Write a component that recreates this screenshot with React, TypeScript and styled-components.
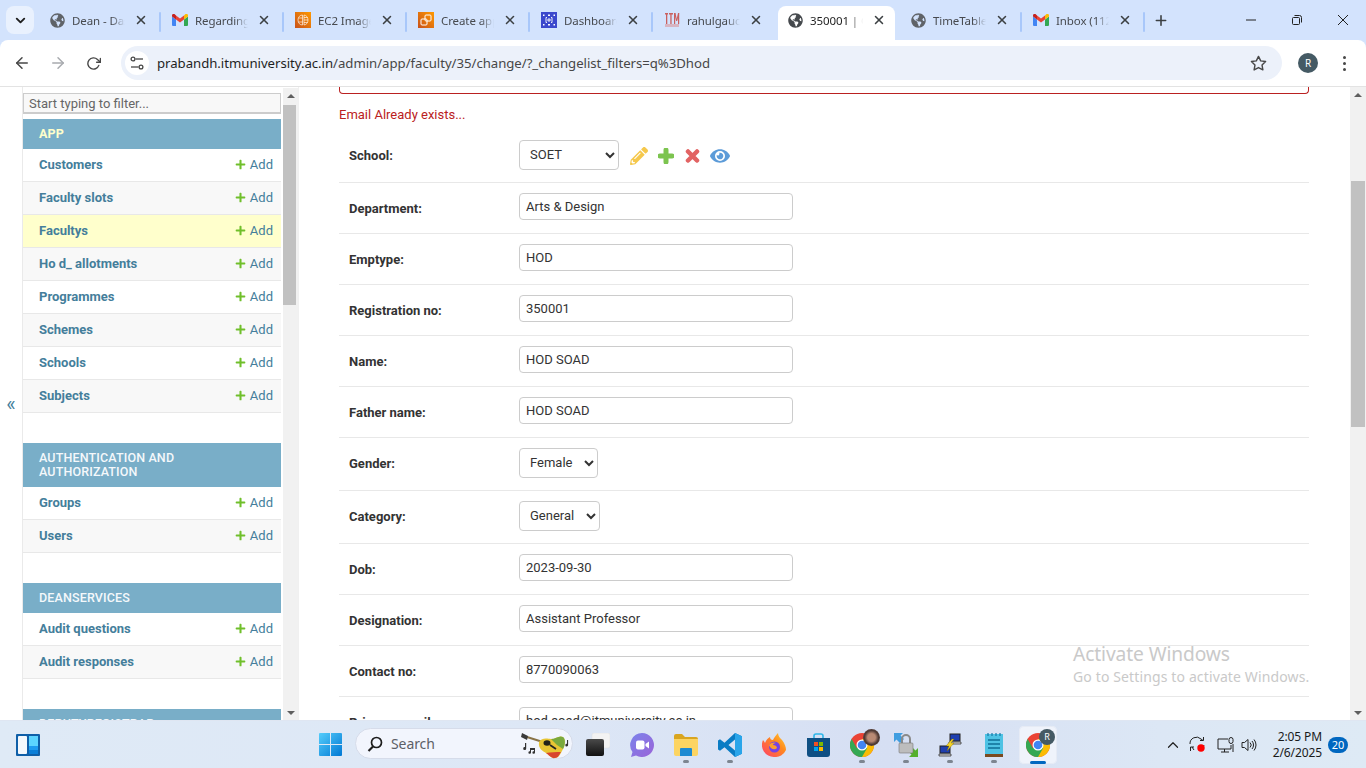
import React from "react";
import styled, { createGlobalStyle } from "styled-components";
import { FaGlobeAmericas, FaPencilAlt, FaPlus, FaEye } from "react-icons/fa";
import { FiArrowLeft, FiArrowRight, FiChevronDown, FiChevronUp, FiPlus, FiRotateCw, FiStar, FiX } from "react-icons/fi";

const Global = createGlobalStyle`
  html, body { margin: 0; padding: 0; height: 100%; overflow: hidden; background: #fff; }
  * { box-sizing: border-box; }
`;

const UI = `"Noto Sans", "Open Sans", sans-serif`;
const WEB = `Roboto, "Liberation Sans", sans-serif`;

const Screen = styled.div`
  width: 1366px; height: 768px; display: flex; flex-direction: column; overflow: hidden; position: relative;
`;

/* ---------- tab strip ---------- */
const TabStrip = styled.div`
  height: 40px; flex: none; background: #d3e3fd; display: flex; align-items: flex-start; padding-left: 6px;
`;
const TabSearch = styled.div`
  width: 28px; height: 28px; margin-top: 6px; margin-right: 3px; border-radius: 8px; background: #e9f1fe;
  display: flex; align-items: center; justify-content: center; color: #1f1f1f; flex: none;
`;
const Tab = styled.div<{ $active?: boolean; $sep?: boolean }>`
  width: 123px; height: 34px; margin-top: 6px; flex: none; display: flex; align-items: center; padding: 0 11px 6px 12px;
  position: relative; z-index: ${(p) => (p.$active ? 1 : 0)};
  &::before {
    content: ""; position: absolute; top: 0; bottom: 0; left: 3px; right: 3px; z-index: -1;
    background: ${(p) => (p.$active ? "#fff" : "transparent")}; border-radius: 8px 8px 0 0;
  }
  &::after {
    content: ""; display: ${(p) => (p.$sep ? "block" : "none")}; position: absolute; right: -1px; top: 6px;
    width: 2px; height: 20px; background: #a8c7fa; border-radius: 1px;
  }
`;
const Favicon = styled.span`
  width: 16px; height: 16px; flex: none; display: flex; align-items: center; justify-content: center; color: #5f6368;
`;
const TabTitle = styled.span<{ $active?: boolean }>`
  flex: 1; min-width: 0; margin-left: 7px; padding-top: 1px; font: 11.5px/16px ${UI}; letter-spacing: -0.1px; white-space: nowrap; overflow: hidden;
  color: ${(p) => (p.$active ? "#1f1f1f" : "#474a4f")};
  -webkit-mask-image: linear-gradient(90deg, #000 75%, transparent 100%);
  mask-image: linear-gradient(90deg, #000 75%, transparent 100%);
`;
const TabClose = styled.span`
  width: 16px; height: 16px; margin-left: 8px; flex: none; display: flex; align-items: center; justify-content: center; color: #3c4043;
`;
const NewTab = styled.div`
  width: 16px; height: 16px; margin: 12px 0 0 9px; color: #3c4043; display: flex; align-items: center; justify-content: center;
`;
const WindowButtons = styled.div`
  margin-left: auto; display: flex; height: 40px;
`;
const WindowButton = styled.div`
  width: 46px; height: 40px; display: flex; align-items: center; justify-content: center; color: #222;
`;

/* ---------- toolbar ---------- */
const Toolbar = styled.div`
  height: 46px; flex: none; background: #d3e3fd;
`;
const ToolbarInner = styled.div`
  height: 46px; background: #fff; border-radius: 8px 8px 0 0; display: flex; align-items: center; padding-left: 12px;
`;
const NavButton = styled.div<{ $dim?: boolean; $gap: number }>`
  width: 20px; height: 20px; margin-right: ${(p) => p.$gap}px; display: flex; align-items: center; justify-content: center;
  color: ${(p) => (p.$dim ? "#a8abaf" : "#474747")};
`;
const Omnibox = styled.div`
  width: 1161px; height: 34px; margin-left: 1px; border-radius: 17px; background: #ecf1fa; display: flex; align-items: center; padding: 0 15px 0 4px;
`;
const TuneBadge = styled.div`
  width: 24px; height: 24px; border-radius: 50%; background: #fff; display: flex; align-items: center; justify-content: center; flex: none;
`;
const Url = styled.div`
  margin-left: 8px; flex: 1; font: 13.2px/18px ${UI}; color: #1f1f1f; white-space: nowrap; letter-spacing: -0.03px;
`;
const UrlRest = styled.span`
  color: #474747;
`;
const Avatar = styled.div`
  width: 20px; height: 20px; border-radius: 50%; margin-left: 16px; background: #455a64; color: #fff; font: 10px/20px ${UI}; text-align: center; flex: none;
`;
const Dots = styled.div`
  margin-left: 25px; width: 3px; display: flex; flex-direction: column; gap: 3px;
  i { width: 3px; height: 3px; border-radius: 50%; background: #474747; display: block; }
`;

/* ---------- page ---------- */
const Page = styled.div`
  height: 634px; flex: none; display: flex; overflow: hidden; border-top: 1px solid #e3e3e3; position: relative;
`;
const Toggle = styled.div`
  width: 23px; flex: none; border-right: 1px solid #eaeaea; display: flex; align-items: center; justify-content: center;
  font: 20px/20px ${WEB}; color: #447e9b;
`;
const SideCol = styled.div`
  width: 258px; flex: none; padding-top: 6px; font-family: ${WEB}; overflow: hidden;
`;
const Filter = styled.div`
  height: 21px; background: #f8f8f8; border: 1px solid #ccc; border-width: 1px 1px 2px 1px; font: 13px/19px ${WEB}; color: #666; padding-left: 5px; margin-bottom: 5px;
`;
const Module = styled.section`
  margin-bottom: 30px;
`;
const ModuleHead = styled.div<{ $current?: boolean }>`
  background: #79aec8; padding: 8px 30px 8px 16px; font: ${(p) => (p.$current ? 700 : 500)} 12.5px/14px ${WEB}; letter-spacing: 0.15px;
  color: ${(p) => (p.$current ? "#ffffcc" : "#f4f8fb")}; white-space: normal;
`;
const ModelRow = styled.div<{ $even?: boolean; $current?: boolean }>`
  height: 33px; display: flex; align-items: center; padding: 0 8px 0 16px; border-bottom: 1px solid #e8e8e8;
  background: ${(p) => (p.$current ? "#ffffcc" : p.$even ? "#f8f8f8" : "#fff")};
`;
const ModelLink = styled.span`
  font: 700 13px/16px ${WEB}; color: #447e9b;
`;
const AddLink = styled.span`
  margin-left: auto; display: flex; align-items: center; gap: 4px; font: 13px/16px ${WEB}; color: #447e9b;
  svg { color: #70bf2b; margin-top: -2px; }
`;
const Scrollbar = styled.div<{ $thumbTop: number; $thumbHeight: number }>`
  width: 16px; flex: none; background: #f1f1f1; display: flex; flex-direction: column; align-items: center; position: relative;
  &::before {
    content: ""; display: block; width: 14px; flex: none; margin-top: ${(p) => p.$thumbTop}px; height: ${(p) => p.$thumbHeight}px; background: #c1c1c1;
  }
`;
const ArrowUp = styled.span`
  position: absolute; top: 6px; left: 4px; width: 0; height: 0;
  border-left: 4px solid transparent; border-right: 4px solid transparent; border-bottom: 4px solid #5f5f5f;
`;
const ArrowDown = styled.span`
  position: absolute; bottom: 5px; left: 4px; width: 0; height: 0;
  border-left: 4px solid transparent; border-right: 4px solid transparent; border-top: 4px solid #5f5f5f;
`;
const SideScroll = styled(Scrollbar)`
  margin-left: 2px; width: 15px; margin-top: 1px; &::before { width: 13px; margin-right: 2px; }
`;
const Main = styled.main`
  flex: 1; min-width: 0; padding: 0 41px 0 40px; border-left: 1px solid #f0f0f0; font-family: ${WEB}; overflow: hidden;
`;
const ErrorBox = styled.div`
  height: 7px; border: 1px solid #ba2121; border-top: 0; border-radius: 0 0 4px 4px;
`;
const ErrorText = styled.p`
  margin: 13px 0 7px; font: 13px/16px ${WEB}; color: #ba2121;
`;
const Row = styled.div`
  display: flex; align-items: flex-start; padding: 10px 0 12px 10px; border-bottom: 1px solid #e8e8e8;
`;
const InputRow = styled(Row)`
  padding-bottom: 13px;
`;
const Label = styled.label`
  width: 170px; flex: none; margin-top: 8px; font: 700 13px/16px ${WEB}; color: #333;
`;
const TextInput = styled.input`
  width: 274px; height: 27px; padding: 0 6px; border: 1px solid #ccc; border-radius: 4px; font: 13px ${WEB}; color: #333; background: #fff; outline: none;
`;
const Select = styled.select<{ $w: number }>`
  width: ${(p) => p.$w}px; height: 30px; padding: 0 6px 1px 6px; border: 1px solid #ccc; border-radius: 4px; font: 13px ${WEB}; color: #333; background: #fff; outline: none;
`;
const Related = styled.div`
  display: flex; align-items: center; height: 30px; margin-left: 11px; padding-top: 2px;
`;
const RelatedIcon = styled.span<{ $color: string; $gap: number }>`
  display: flex; color: ${(p) => p.$color}; margin-right: ${(p) => p.$gap}px;
`;
const Watermark = styled.div`
  position: absolute; left: 1073px; top: 553px; color: #c9c9c9; font-family: ${UI}; pointer-events: none;
`;
const WaterTitle = styled.div`
  font-size: 19.2px; line-height: 27px; letter-spacing: -0.1px;
`;
const WaterSub = styled.div`
  font-size: 14px; line-height: 19px; letter-spacing: 0.13px; white-space: nowrap;
`;

/* ---------- taskbar ---------- */
const Taskbar = styled.footer`
  height: 48px; flex: none; display: flex; align-items: center; border-top: 1px solid #dfe6f2;
  background: linear-gradient(90deg, #dfeaf6 0%, #dde7f6 40%, #d6dff3 65%, #dce7f5 85%, #deeaf5 100%);
`;
const WidgetArea = styled.div`
  width: 308px; flex: none; padding-left: 16px; display: flex;
`;
const TaskCell = styled.div<{ $running?: boolean }>`
  width: 44px; height: 38px; flex: none; display: flex; align-items: center; justify-content: center; position: relative; border-radius: 5px;
  &::after {
    content: ""; display: ${(p) => (p.$running ? "block" : "none")}; position: absolute; bottom: 1px; left: 50%;
    transform: translateX(-50%); height: 3px; border-radius: 2px; width: 6px; background: #7d8590;
  }
`;
const ActiveCell = styled(TaskCell)`
  width: 38px; margin: 0 3px; background: #eff3fb; box-shadow: inset 0 0 0 1px #e6ebf5;
  &::after { display: block; bottom: 0; width: 16px; background: #0067c0; }
`;
const SearchPill = styled.div`
  width: 218px; height: 31px; margin: -2px 3px 0; flex: none; border-radius: 16px; background: #f2f5fd; border: 1px solid #d6dcea;
  display: flex; align-items: center; padding-left: 11px; position: relative; font: 14px/18px ${UI}; color: #5c5f66;
`;
const SearchLabel = styled.span`
  margin-left: 8px; letter-spacing: -0.1px;
`;
const GuitarArt = styled.span`
  position: absolute; right: -1px; top: -1px; display: flex;
`;
const Tray = styled.div`
  margin-left: auto; padding-right: 18px; display: flex; align-items: center;
`;
const TrayIcon = styled.span<{ $gap: number }>`
  display: flex; color: #222; margin-right: ${(p) => p.$gap}px;
`;
const Clock = styled.div`
  font: 12px/16px ${UI}; color: #1a1a1a; text-align: right; margin-left: 15px; letter-spacing: -0.1px; white-space: nowrap;
`;
const Badge = styled.div`
  width: 20px; height: 16px; border-radius: 8px; margin-left: 6px; background: #0067c0; color: #fff; font: 11px/16px ${UI}; text-align: center;
`;

/* ---------- drawings ---------- */
const Gmail = () => (
  <svg width="16" height="12" viewBox="0 0 16 12">
    <path fill="#4285f4" d="M1 12h3V5.500L0 2.500V11a1 1 0 0 0 1 1z" />
    <path fill="#34a853" d="M12 12h3a1 1 0 0 0 1-1V2.500l-4 3z" />
    <path fill="#fbbc04" d="M12 1.500v4l4-3v-1C16 .1 14.400-.7 13.300.2z" />
    <path fill="#ea4335" d="M4 5.500v-4l4 3 4-3v4l-4 3z" />
    <path fill="#c5221f" d="M0 1.500v1l4 3v-4L2.700.2C1.600-.7 0 .1 0 1.500z" />
  </svg>
);
const AwsBuilder = () => (
  <svg width="16" height="16" viewBox="0 0 16 16">
    <defs><linearGradient id="ao" x1="0" y1="1" x2="1" y2="0"><stop offset="0" stopColor="#c8511b" /><stop offset="1" stopColor="#f90" /></linearGradient></defs>
    <rect width="16" height="16" fill="url(#ao)" />
    <g fill="none" stroke="#fff" strokeOpacity=".8" strokeWidth=".8">
      <path d="M7.500 3C5 3 3 5 3 8s2 5 4.500 5zM9 3c2.500.3 4 2.400 4 5s-1.500 4.700-4 5z" />
      <path d="M3.500 6h4M3.500 10h4M9 5.500h3.500M9 8h4M9 10.500h3.500" />
    </g>
  </svg>
);
const AwsApp = () => (
  <svg width="16" height="16" viewBox="0 0 16 16">
    <defs><linearGradient id="ap" x1="0" y1="1" x2="1" y2="0"><stop offset="0" stopColor="#c8511b" /><stop offset="1" stopColor="#f90" /></linearGradient></defs>
    <rect width="16" height="16" fill="url(#ap)" />
    <g fill="none" stroke="#fff" strokeWidth="1">
      <rect x="7" y="3" width="6" height="6" rx="1" />
      <rect x="3" y="7" width="6" height="6" rx="1" />
    </g>
  </svg>
);
const AwsDash = () => (
  <svg width="16" height="16" viewBox="0 0 16 16">
    <rect width="16" height="16" fill="#3b48cc" />
    <g fill="#fff">
      <rect x="2" y="2.500" width="1.500" height="1.500" /><rect x="7" y="2.500" width="2" height="1.500" /><rect x="12.500" y="2.500" width="1.500" height="1.500" />
      <rect x="2" y="12" width="1.500" height="1.500" /><rect x="7" y="12" width="2" height="1.500" /><rect x="12.500" y="12" width="1.500" height="1.500" />
    </g>
    <path fill="none" stroke="#fff" strokeWidth=".9" d="M6 5.500H5v5h1M10 5.500h1v5h-1M7 7h2v2H7z" />
  </svg>
);
const ItmLogo = () => (
  <svg width="16" height="16" viewBox="0 0 16 16" style={{ filter: "blur(.6px)" }}>
    <g fill="#c9605f">
      <rect x="1" y="1" width="3" height="1.500" /><rect x="2" y="1" width="1.300" height="11" />
      <rect x="5" y="1" width="4" height="1.500" /><rect x="6.300" y="1" width="1.300" height="11" />
      <rect x="10" y="1" width="1.200" height="11" /><rect x="14" y="1" width="1.200" height="11" /><path d="M10 1h1.500l1.200 6 1.300-6h1.200l-2 8h-1z" />
    </g>
    <rect x="1" y="12" width="14" height="3" fill="#d9a0a8" opacity=".7" />
  </svg>
);
const Tune = () => (
  <svg width="16" height="16" viewBox="0 0 16 16" fill="none" stroke="#474747" strokeWidth="1.300">
    <circle cx="4" cy="4" r="1.900" /><path d="M6.500 4H14" />
    <circle cx="12" cy="12" r="1.900" /><path d="M2 12h7.500" />
  </svg>
);
const WinMin = () => <svg width="10" height="10" viewBox="0 0 10 10"><path d="M0 5h10" stroke="#222" /></svg>;
const WinMax = () => (
  <svg width="10" height="10" viewBox="0 0 10 10" fill="none" stroke="#222"><rect x=".5" y="2.500" width="7" height="7" rx="1" /><path d="M2.500 .5h5a2 2 0 0 1 2 2v5" /></svg>
);
const WinClose = () => <svg width="10" height="10" viewBox="0 0 10 10"><path d="M0 0l10 10M10 0L0 10" stroke="#222" /></svg>;

const ChunkyPlus = () => (
  <svg width="16" height="16" viewBox="0 0 16 16"><path d="M8 2v12M2 8h12" stroke="#7cc44f" strokeWidth="5" strokeLinecap="round" /></svg>
);
const ChunkyCross = () => (
  <svg width="15" height="14" viewBox="0 0 15 14"><path d="M3 2.500l9 9M12 2.500l-9 9" stroke="#e26363" strokeWidth="4.500" strokeLinecap="round" /></svg>
);

const WidgetIcon = () => (
  <svg width="24" height="22" viewBox="0 0 24 22">
    <rect width="24" height="22" rx="1" fill="#0f5fa8" />
    <rect x="2" y="2" width="9" height="18" rx="1" fill="#f4f8fc" />
    <rect x="13" y="2" width="9" height="10" fill="#5cd4ff" />
    <rect x="13" y="12" width="9" height="4" fill="#1e9bf0" />
    <rect x="13" y="16" width="9" height="4" fill="#0b7fd8" />
  </svg>
);
const StartIcon = () => (
  <svg width="23" height="23" viewBox="0 0 23 23">
    <defs><linearGradient id="st" x1="0" y1="0" x2="1" y2="1"><stop offset="0" stopColor="#55cdfb" /><stop offset="1" stopColor="#0078d4" /></linearGradient></defs>
    <path fill="url(#st)" d="M1 0h10v11H0V1a1 1 0 0 1 1-1zM12 0h10a1 1 0 0 1 1 1v10H12zM0 12h11v11H1a1 1 0 0 1-1-1zM12 12h11v10a1 1 0 0 1-1 1H12z" />
  </svg>
);
const SearchGlass = () => (
  <svg width="16" height="16" viewBox="0 0 16 16" fill="none" stroke="#1d1d1d" strokeWidth="1.700">
    <circle cx="9.500" cy="6.500" r="5" /><path d="M6 10.500L1.500 15" strokeWidth="2.200" />
  </svg>
);
const Guitar = () => (
  <svg width="54" height="32" viewBox="0 0 54 32">
    <path d="M8 9l19 6" stroke="#8a7448" strokeWidth="2" />
    <path d="M3 5l6 3-1 4-6-3z" fill="#3a3a3a" />
    <path d="M20 14C23 9 29 11 32 11c5 0 8-4 12-2 3 2 2 9 0 12-2 4-4 9-8 9-3 1-6-3-9-5-3-2-8-4-7-11z" fill="#e8c534" />
    <path d="M32 11c5 0 8-4 12-2 3 2 2 9 0 12l-6-4z" fill="#7aa93e" />
    <path d="M27 25c5-1 10-1 15-1-2 3-3 6-6 6-3 1-6-3-9-5z" fill="#d8452e" />
    <ellipse cx="28" cy="15" rx="3.500" ry="2.800" fill="#22221a" />
    <path d="M31 17l6 4" stroke="#222" strokeWidth="1.800" />
    <g fill="#333">
      <path d="M6 15h1.200v5.500a1.500 1.500 0 1 1-1.200-1.400z" />
      <path d="M11 20h5v4.500a1.300 1.300 0 1 1-1-1.200V22h-3v2.500a1.300 1.300 0 1 1-1-1.200z" />
      <path d="M48 12h1.100v5a1.400 1.400 0 1 1-1.100-1.300z" />
    </g>
  </svg>
);
const BlackSquares = () => (
  <svg width="24" height="23" viewBox="0 0 24 23">
    <defs><linearGradient id="bl" x1="0" y1="0" x2="0" y2="1"><stop offset="0" stopColor="#4a4a4a" /><stop offset="1" stopColor="#111" /></linearGradient></defs>
    <rect x="6" y="0" width="18" height="15" rx="2" fill="#f3f3f3" stroke="#ddd" strokeWidth=".5" />
    <rect x="0" y="6" width="18" height="17" rx="2" fill="url(#bl)" />
  </svg>
);
const VideoChat = () => (
  <svg width="24" height="24" viewBox="0 0 24 24">
    <defs><linearGradient id="vc" x1="0" y1="0" x2="1" y2="1"><stop offset="0" stopColor="#7b83eb" /><stop offset="1" stopColor="#9a64d8" /></linearGradient></defs>
    <path fill="url(#vc)" d="M12 0a12 12 0 1 1-6 22.400L1 24l1.500-5A12 12 0 0 1 12 0z" />
    <rect x="6" y="7.500" width="8.500" height="9" rx="2" fill="#fff" /><path d="M15.500 11l3.500-2.500v7L15.500 13z" fill="#fff" />
  </svg>
);
const Folder = () => (
  <svg width="24" height="22" viewBox="0 0 24 22">
    <path d="M0 2a2 2 0 0 1 2-2h6l3 3h11a2 2 0 0 1 2 2v2H0z" fill="#d9a520" />
    <path d="M0 5h24v15a2 2 0 0 1-2 2H2a2 2 0 0 1-2-2z" fill="#fcd462" />
    <path d="M7 14h10a1 1 0 0 1 1 1v7H6v-7a1 1 0 0 1 1-1z" fill="#1d8ad2" />
  </svg>
);
const VSCode = () => (
  <svg width="24" height="24" viewBox="0 0 24 24">
    <path fill="#0a7cc4" d="M17 0l7 3.300v17.400L17 24 6.500 14.300 2 17.800 0 16.500V7.500l2-1.300 4.500 3.500zM17 6.500L10.500 12l6.500 5.500z" />
    <path fill="#2aa5ea" d="M17 0l7 3.300v17.400L17 24z" />
  </svg>
);
const Firefox = () => (
  <svg width="24" height="24" viewBox="0 0 24 24">
    <defs><linearGradient id="ff" x1="0" y1="1" x2="1" y2="0"><stop offset="0" stopColor="#ff3d6e" /><stop offset=".6" stopColor="#ff8a1e" /><stop offset="1" stopColor="#ffd23a" /></linearGradient></defs>
    <path fill="url(#ff)" d="M12 24A12 12 0 0 1 1 7c1 1 1.500 2 2 3 1-3 3-5 5-6 0 2 1 3 3 3 1-2 3-5 5-7 0 3 2 5 4 7 3 4 4 7 4 10a12 12 0 0 1-12 7z" />
    <circle cx="12.500" cy="14" r="5.500" fill="#7542e5" />
    <path d="M7 12c2-3 6-3 7-2-2 0-3 1-3 2 2 0 4 1 4 3-2 2-6 2-8-3z" fill="#ff9d2e" />
  </svg>
);
const Store = () => (
  <svg width="23" height="24" viewBox="0 0 23 24">
    <path d="M7 5V3a2 2 0 0 1 2-2h5a2 2 0 0 1 2 2v2" fill="none" stroke="#2fb6e8" strokeWidth="1.600" />
    <path d="M0 5h23v16a3 3 0 0 1-3 3H3a3 3 0 0 1-3-3z" fill="#0f4f83" />
    <rect x="7" y="9" width="4" height="4" fill="#f25022" /><rect x="12" y="9" width="4" height="4" fill="#7fba00" />
    <rect x="7" y="14" width="4" height="4" fill="#00a4ef" /><rect x="12" y="14" width="4" height="4" fill="#ffb900" />
  </svg>
);
const Chrome = () => (
  <svg width="24" height="24" viewBox="0 0 24 24">
    <circle cx="12" cy="12" r="12" fill="#ea4335" />
    <path d="M12 24A12 12 0 0 0 22.400 6H12z" fill="#fbbc04" />
    <path d="M1.600 6A12 12 0 0 0 12 24l5.200-9H6.800z" fill="#34a853" />
    <circle cx="12" cy="12" r="5.500" fill="#fff" /><circle cx="12" cy="12" r="4.300" fill="#4285f4" />
  </svg>
);
const ProfileFace = styled.span`
  position: absolute; top: 3px; left: 23px; width: 17px; height: 17px; border-radius: 50%;
  background: radial-gradient(circle at 50% 50%, #b98a74 0 32%, #4e3a35 58%, #6e5147 100%);
`;
const ProfileR = styled.span`
  position: absolute; top: 3px; left: 20px; width: 16px; height: 16px; border-radius: 50%; background: #455a64; color: #fff; font: 9px/16px ${UI}; text-align: center;
`;
const LockNet = () => (
  <svg width="24" height="24" viewBox="0 0 24 24">
    <path d="M0 0h9L6.500 2.500 10 6 6 10 2.500 6.500 0 9z" fill="#3f9de0" />
    <path d="M24 24h-9l2.500-2.500L14 18l4-4 3.500 3.500L24 15z" fill="#55b02c" />
    <path d="M8 10V6a4 4 0 0 1 8 0v4" fill="none" stroke="#8a8a8a" strokeWidth="2" />
    <rect x="5" y="10" width="14" height="10" rx="1" fill="#bdbdbd" stroke="#777" strokeWidth=".6" />
  </svg>
);
const NetPCs = () => (
  <svg width="24" height="24" viewBox="0 0 24 24">
    <rect x="12" y="1" width="10" height="7" fill="#1f3fb0" stroke="#222" />
    <path d="M11 9h12v2H11z" fill="#ddd" stroke="#222" strokeWidth=".7" />
    <rect x="2" y="13" width="10" height="7" fill="#1f3fb0" stroke="#222" />
    <path d="M1 21h12v2H1z" fill="#ddd" stroke="#222" strokeWidth=".7" />
    <path d="M14 6l-6 7h3l-2 5 7-8h-3l3-4z" fill="#f5d327" stroke="#7a6500" strokeWidth=".4" />
  </svg>
);
const Notepad = () => (
  <svg width="18" height="24" viewBox="0 0 18 24">
    <rect y="1" width="18" height="20" fill="#4ec2e4" />
    <rect y="21" width="18" height="3" fill="#7a4a20" />
    <path d="M3 0v3M7 0v3M11 0v3M15 0v3" stroke="#1779a8" strokeWidth="1.200" />
    <path d="M3 7h12M3 11h12M3 15h12" stroke="#0f6f96" strokeWidth="1.400" />
  </svg>
);
const SyncIcon = () => (
  <svg width="18" height="17" viewBox="0 0 18 17" fill="none" stroke="#222" strokeWidth="1">
    <path d="M1 8a6.500 6.500 0 0 1 11-5l2 1.500M14.500 1v3.500H11M15 9a6.500 6.500 0 0 1-1 2M3 11l2 3M1.500 15v-4h3.500" />
    <circle cx="12" cy="12" r="3.700" fill="#f00" stroke="none" />
  </svg>
);
const MonitorIcon = () => (
  <svg width="17" height="16" viewBox="0 0 17 16" fill="none" stroke="#222" strokeWidth="1">
    <path d="M11 2H1v10h13V8M4 15h8M7.500 12v3" />
    <rect x="12" y=".5" width="4" height="6" rx="2" />
    <path d="M16 7v8" />
  </svg>
);
const VolumeIcon = () => (
  <svg width="17" height="14" viewBox="0 0 17 14" fill="none" stroke="#222" strokeWidth="1">
    <path d="M1 4.500h2.500L7 1.500v11l-3.500-3H1zM9 4.500a3.500 3.500 0 0 1 0 5M11 3a6 6 0 0 1 0 8M13 1.500a8.500 8.500 0 0 1 0 11" />
  </svg>
);

const tabs = [
  { icon: <FaGlobeAmericas size={15} />, title: "Dean - Dashboard", sep: true },
  { icon: <Gmail />, title: "Regarding the mail", sep: true },
  { icon: <AwsBuilder />, title: "EC2 Image Builder", sep: true },
  { icon: <AwsApp />, title: "Create application", sep: true },
  { icon: <AwsDash />, title: "Dashboard | Console", sep: true },
  { icon: <ItmLogo />, title: "rahulgaucha", sep: false },
  { icon: <FaGlobeAmericas size={15} color="#45494d" />, title: "350001 | Change", active: true, sep: false },
  { icon: <FaGlobeAmericas size={15} />, title: "TimeTable - Admin", sep: true },
  { icon: <Gmail />, title: "Inbox (1123) - rahul", sep: true },
];

const modules = [
  { title: "APP", current: true, rows: ["Customers", "Faculty slots", "Facultys", "Ho d_ allotments", "Programmes", "Schemes", "Schools", "Subjects"] },
  { title: "AUTHENTICATION AND AUTHORIZATION", rows: ["Groups", "Users"] },
  { title: "DEANSERVICES", rows: ["Audit questions", "Audit responses"] },
  { title: "DEPUTYREGISTRAR", rows: ["Audit"] },
];

type Field = { label: string; value: string; width?: number };
const fields: Field[] = [
  { label: "Department:", value: "Arts & Design" },
  { label: "Emptype:", value: "HOD" },
  { label: "Registration no:", value: "350001" },
  { label: "Name:", value: "HOD SOAD" },
  { label: "Father name:", value: "HOD SOAD" },
  { label: "Gender:", value: "Female", width: 79 },
  { label: "Category:", value: "General", width: 81 },
  { label: "Dob:", value: "2023-09-30" },
  { label: "Designation:", value: "Assistant Professor" },
  { label: "Contact no:", value: "8770090063" },
  { label: "Primary email:", value: "hod.soad@itmuniversity.ac.in" },
];

export default function App() {
  return (
    <Screen>
      <Global />
      <TabStrip>
        <TabSearch><FiChevronDown size={15} strokeWidth={3} /></TabSearch>
        {tabs.map((t) => (
          <Tab key={t.title} $active={t.active} $sep={t.sep}>
            <Favicon>{t.icon}</Favicon>
            <TabTitle $active={t.active}>{t.title}</TabTitle>
            <TabClose><FiX size={14} strokeWidth={2.6} /></TabClose>
          </Tab>
        ))}
        <NewTab><FiPlus size={17} strokeWidth={2.4} /></NewTab>
        <WindowButtons>
          <WindowButton><WinMin /></WindowButton>
          <WindowButton><WinMax /></WindowButton>
          <WindowButton><WinClose /></WindowButton>
        </WindowButtons>
      </TabStrip>
      <Toolbar>
        <ToolbarInner>
          <NavButton $gap={16}><FiArrowLeft size={18} strokeWidth={2} /></NavButton>
          <NavButton $dim $gap={15}><FiArrowRight size={18} strokeWidth={2} /></NavButton>
          <NavButton $gap={17}><FiRotateCw size={15} strokeWidth={2.2} /></NavButton>
          <Omnibox>
            <TuneBadge><Tune /></TuneBadge>
            <Url>prabandh.itmuniversity.ac.in<UrlRest>/admin/app/faculty/35/change/?_changelist_filters=q%3Dhod</UrlRest></Url>
            <FiStar size={17} strokeWidth={2} color="#474747" />
          </Omnibox>
          <Avatar>R</Avatar>
          <Dots><i /><i /><i /></Dots>
        </ToolbarInner>
      </Toolbar>
      <Page>
        <Toggle>«</Toggle>
        <SideCol>
          <Filter>Start typing to filter...</Filter>
          {modules.map((m) => (
            <Module key={m.title}>
              <ModuleHead $current={m.current}>{m.title}</ModuleHead>
              {m.rows.map((r, i) => (
                <ModelRow key={r} $even={i % 2 === 1} $current={r === "Facultys"}>
                  <ModelLink>{r}</ModelLink>
                  <AddLink><FaPlus size={11} />Add</AddLink>
                </ModelRow>
              ))}
            </Module>
          ))}
        </SideCol>
        <SideScroll $thumbTop={17} $thumbHeight={200}><ArrowUp /><ArrowDown /></SideScroll>
        <Main>
          <ErrorBox />
          <ErrorText>Email Already exists...</ErrorText>
          <Row>
            <Label>School:</Label>
            <Select $w={100} defaultValue="SOET"><option>SOET</option></Select>
            <Related>
              <RelatedIcon $color="#f5c84c" $gap={10}><FaPencilAlt size={18} /></RelatedIcon>
              <RelatedIcon $color="#7cc44f" $gap={11}><ChunkyPlus /></RelatedIcon>
              <RelatedIcon $color="#e26363" $gap={10}><ChunkyCross /></RelatedIcon>
              <RelatedIcon $color="#5c9bd8" $gap={0}><FaEye size={20} /></RelatedIcon>
            </Related>
          </Row>
          {fields.map((f) =>
            f.width ? (
              <Row key={f.label}>
                <Label>{f.label}</Label>
                <Select $w={f.width} defaultValue={f.value}><option>{f.value}</option></Select>
              </Row>
            ) : (
              <InputRow key={f.label}>
                <Label>{f.label}</Label>
                <TextInput defaultValue={f.value} readOnly />
              </InputRow>
            )
          )}
        </Main>
        <Scrollbar $thumbTop={94} $thumbHeight={246}><ArrowUp /><ArrowDown /></Scrollbar>
        <Watermark>
          <WaterTitle>Activate Windows</WaterTitle>
          <WaterSub>Go to Settings to activate Windows.</WaterSub>
        </Watermark>
      </Page>
      <Taskbar>
        <WidgetArea><WidgetIcon /></WidgetArea>
        <TaskCell><StartIcon /></TaskCell>
        <SearchPill>
          <SearchGlass />
          <SearchLabel>Search</SearchLabel>
          <GuitarArt><Guitar /></GuitarArt>
        </SearchPill>
        <TaskCell><BlackSquares /></TaskCell>
        <TaskCell><VideoChat /></TaskCell>
        <TaskCell $running><Folder /></TaskCell>
        <TaskCell $running><VSCode /></TaskCell>
        <TaskCell><Firefox /></TaskCell>
        <TaskCell><Store /></TaskCell>
        <TaskCell $running><Chrome /><ProfileFace /></TaskCell>
        <TaskCell $running><LockNet /></TaskCell>
        <TaskCell $running><NetPCs /></TaskCell>
        <TaskCell $running><Notepad /></TaskCell>
        <ActiveCell><Chrome /><ProfileR>R</ProfileR></ActiveCell>
        <Tray>
          <TrayIcon $gap={7}><FiChevronUp size={18} strokeWidth={1.6} /></TrayIcon>
          <TrayIcon $gap={10}><SyncIcon /></TrayIcon>
          <TrayIcon $gap={7}><MonitorIcon /></TrayIcon>
          <TrayIcon $gap={0}><VolumeIcon /></TrayIcon>
          <Clock>2:05 PM<br />2/6/2025</Clock>
          <Badge>20</Badge>
        </Tray>
      </Taskbar>
    </Screen>
  );
}
